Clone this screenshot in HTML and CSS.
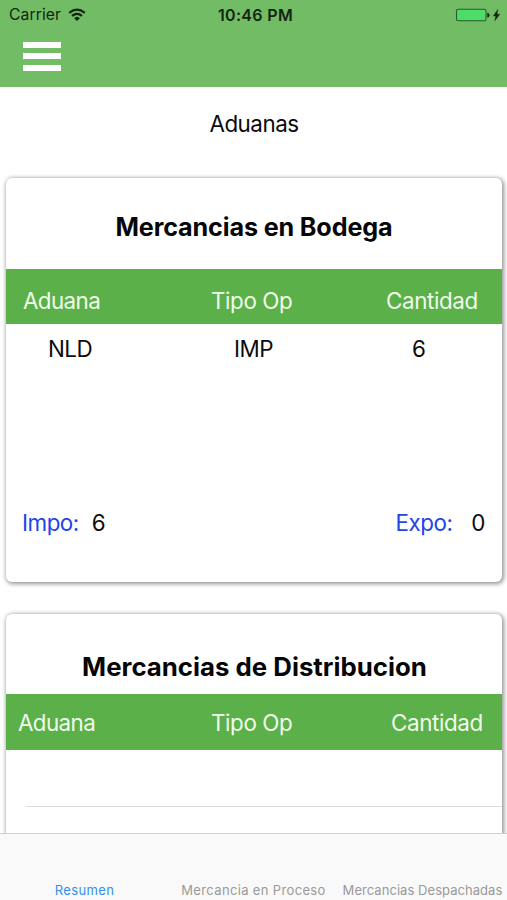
FILE: index.html
```html
<!DOCTYPE html>
<html lang="es">
<head>
<meta charset="utf-8">
<title>Aduanas</title>
<link rel="stylesheet" href="styles.css">
</head>
<body>
<div class="app">
  <header class="topbar">
    <div class="status">
      <div class="carrier"><span class="carrier-name">Carrier</span>
        <svg class="wifi" width="18" height="14" viewBox="0 0 18 14" fill="none" stroke="#12250f" stroke-width="2.2"><path d="M1.2 4.9Q9 -1.5 16.8 4.9"/><path d="M4 7.9Q9 3.7 14 7.9"/><path d="M6.1 10.2Q9 7.2 11.9 10.2L9 12.9Z" fill="#12250f" stroke="none"/></svg>
      </div>
      <div class="clock"><span>10:46 PM</span></div>
      <div class="power">
        <svg width="46" height="15" viewBox="0 0 46 15"><rect x="1.5" y="1.2" width="29.5" height="11.6" rx="1.8" fill="#4cdc67" stroke="#2b5a2b" stroke-width="1.1"/><path d="M32.3 4.8Q34.5 5 34.5 7.2T32.3 9.6Z" fill="#12250f"/><path d="M42.8 1.4L38.3 8H40.8L39.8 12.8L44.8 6.2H42Z" fill="#12250f" stroke="#12250f" stroke-width=".4"/></svg>
      </div>
    </div>
    <button class="menu" aria-label="Menu"><i></i><i></i><i></i></button>
  </header>
  <main class="content">
    <h1 class="page-title">Aduanas</h1>
    <section class="card bodega">
      <h2>Mercancias en Bodega</h2>
      <div class="row head"><span>Aduana</span><span>Tipo Op</span><span>Cantidad</span></div>
      <div class="row data"><span>NLD</span><span>IMP</span><span>6</span></div>
      <div class="totals">
        <div class="total impo"><span class="label">Impo:</span><span>6</span></div>
        <div class="total expo"><span class="label">Expo:</span><span>0</span></div>
      </div>
    </section>
    <section class="card distribucion">
      <h2>Mercancias de Distribucion</h2>
      <div class="row head"><span>Aduana</span><span>Tipo Op</span><span>Cantidad</span></div>
      <div class="empty-row"></div>
    </section>
  </main>
  <nav class="tabs">
    <a class="active">Resumen</a>
    <a class="proceso">Mercancia en Proceso</a>
    <a class="despachadas">Mercancias Despachadas</a>
  </nav>
</div>
</body>
</html>
```
FILE: styles.css
```css
* { box-sizing: border-box; }
body { margin: 0; background: #fff; color: #0b0b0d; font: 22.4px/30px Inter, "Liberation Sans", sans-serif; letter-spacing: -.5px; }
.app { height: 900px; display: flex; flex-direction: column; overflow: hidden; }
.topbar { height: 87px; flex: none; background: #72bc66; }
.status { height: 30px; padding: 0 6px 0 9px; display: grid; grid-template-columns: 1fr auto 1fr; grid-template-rows: 30px; align-items: center; color: #12250f; font-size: 15.7px; letter-spacing: .1px; }
.carrier { display: flex; align-items: center; gap: 6px; }
.wifi { margin: -1px 0 0 1px; }
.clock { font-weight: 600; font-size: 16px; letter-spacing: .35px; }
.clock span { margin-left: 1px; }
.power { display: flex; justify-content: flex-end; }
.menu { display: flex; flex-direction: column; gap: 5px; width: 38px; margin: 12px 0 0 23px; padding: 0; border: 0; background: none; }
.menu i { height: 6px; flex: none; background: #fff; }
.menu i:nth-child(3) { margin-top: 1px; }
.content { flex: 1; min-height: 0; overflow: hidden; padding: 0 5px 0 6px; }
.page-title { margin: 22px 0 39px; text-align: center; font-size: inherit; font-weight: 400; }
.card { height: 404px; border-radius: 6px; background: #fff; box-shadow: 1px 1px 4px 1px rgba(0, 0, 0, .42); }
.card h2 { height: 91px; margin: 0; padding-top: 34px; text-align: center; font-size: 25.2px; font-weight: 650; letter-spacing: -.15px; color: #060606; }
.row { display: grid; grid-template-columns: 188px 175px 1fr; }
.head { height: 55px; padding: 17px 0 0 17px; background: #5cb04a; color: #effbea; letter-spacing: -.4px; }
.head span:first-child { letter-spacing: -.6px; }
.data { height: 160px; padding: 10px 0 0 42px; grid-template-columns: 186px 178px 1fr; }
.totals { display: flex; justify-content: space-between; padding: 24px 17px 0 16px; }
.bodega { margin-bottom: 32px; }
.total { display: flex; gap: 13px; }
.expo { gap: 19px; }
.label { color: #2444e8; }
.distribucion { height: 420px; }
.distribucion h2 { height: 80px; padding: 38px 0 0 1px; font-weight: 700; font-size: 25.8px; letter-spacing: 0; }
.distribucion .head { height: 56px; padding: 14px 0 0 12px; grid-template-columns: 193px 180px 1fr; }
.empty-row { height: 57px; margin-left: 20px; border-bottom: 1px solid #dcdcdc; }
.tabs { height: 67px; flex: none; display: grid; grid-template-columns: 169px 169px 169px; border-top: 1px solid #cfcfcf; background: #f9f9f9; color: #999; font-size: 13px; line-height: 18px; letter-spacing: .35px; padding-top: 47px; text-align: center; white-space: nowrap; }
.active { color: #3390ee; }
.despachadas { letter-spacing: .05px; }
```
